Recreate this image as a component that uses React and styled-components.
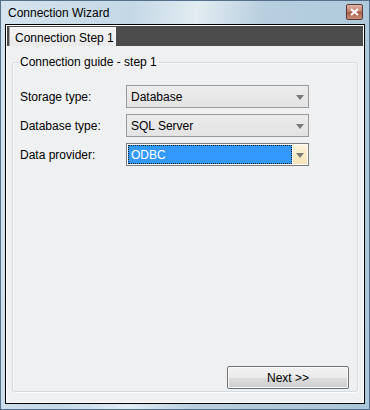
import React from "react";
import styled, { createGlobalStyle } from "styled-components";

const GlobalStyle = createGlobalStyle`
	html, body {
		margin: 0;
		padding: 0;
		background: #9fbfd4;
	}
	body {
		font-family: "Liberation Sans", Arial, sans-serif;
		font-size: 12px;
		color: #000;
	}
`;

const fields = [
	{ label: "Storage type:", value: "Database" },
	{ label: "Database type:", value: "SQL Server" },
	{ label: "Data provider:", value: "ODBC", focused: true },
];

export default function App() {
	return (
		<>
			<GlobalStyle />
			<Window>
				<TitleBar>
					<Title>Connection Wizard</Title>
					<CloseButton>
						<svg width="9" height="8" viewBox="0 0 9 8">
							<path d="M1 1 L8 7 M8 1 L1 7" stroke="#fff" strokeWidth="2" />
						</svg>
					</CloseButton>
				</TitleBar>

				<Client>
					<TabStrip>
						<Tab>Connection Step 1</Tab>
					</TabStrip>
					<Panel>
						<Group>
							<Legend>Connection guide - step 1</Legend>
							<GroupBody>
								<Rows>
									{fields.map((f) => (
										<Row key={f.label}>
											<Label>{f.label}</Label>
											<Combo $focused={f.focused}>
												<ComboText $focused={f.focused}>{f.value}</ComboText>
												<Arrow $focused={f.focused}>
													<svg width="8" height="5" viewBox="0 0 8 5">
														<path d="M0 0 H8 L4 5 Z" fill="#7a7a7a" />
													</svg>
												</Arrow>
											</Combo>
										</Row>
									))}
								</Rows>
								<Footer>
									<NextButton>Next &gt;&gt;</NextButton>
								</Footer>
							</GroupBody>
						</Group>
					</Panel>
				</Client>
			</Window>
		</>
	);
}

const Window = styled.div`
	width: 370px;
	height: 410px;
	box-sizing: border-box;
	display: flex;
	flex-direction: column;
	border: 1px solid #55708a;
	background: linear-gradient(
		100deg,
		#d6e4ee 0%,
		#c4d8e6 30%,
		#e2ecf2 45%,
		#b8cfdf 60%,
		#a9c6da 100%
	);
`;

const TitleBar = styled.div`
	height: 23px;
	display: flex;
	align-items: center;
	justify-content: space-between;
	padding: 0 6px 0 7px;
`;

const Title = styled.div`
	font-size: 12px;
	color: #000;
	padding-top: 1px;
`;

const CloseButton = styled.div`
	width: 15px;
	height: 14px;
	margin-top: -1px;
	border: 1px solid #5a3b34;
	border-radius: 2px;
	display: flex;
	align-items: center;
	justify-content: center;
	background: linear-gradient(#e0b5a8 0%, #c07b68 50%, #a95a47 51%, #c98d77 100%);
`;

const Client = styled.div`
	flex: 1;
	margin: 0 4px 5px 4px;
	border: 1px solid #000;
	box-shadow: inset 0 0 0 1px #fdfdfd;
	display: flex;
	flex-direction: column;
	background: #eff0f1;
	padding: 1px;
`;

const TabStrip = styled.div`
	height: 20px;
	background: #4c4c4c;
	display: flex;
	align-items: flex-end;
	padding-left: 2px;
`;

const Tab = styled.div`
	width: 107px;
	height: 19px;
	box-sizing: border-box;
	background: linear-gradient(#f4f4f4, #e9e9ea);
	border: 1px solid #f8f8f8;
	border-bottom: none;
	border-left-color: #a9a9a9;
	font-size: 12px;
	padding: 3px 0 0 5px;
	white-space: nowrap;
`;

const Panel = styled.div`
	flex: 1;
	display: flex;
	padding: 9px 5px 10px 5px;
`;

const Group = styled.fieldset`
	flex: 1;
	margin: 0;
	padding: 0;
	border: 1px solid #d3dae0;
	border-radius: 3px;
	box-shadow: 1px 1px 0 #fbfbfb, inset 1px 1px 0 #fbfbfb;
	display: flex;
	min-width: 0;
`;

const Legend = styled.legend`
	margin-left: 5px;
	padding: 0 2px;
	font-size: 12px;
	line-height: 14px;
`;

const GroupBody = styled.div`
	flex: 1;
	display: flex;
	flex-direction: column;
	justify-content: space-between;
	padding: 16px 8px 2px 7px;
`;

const Rows = styled.div`
	display: flex;
	flex-direction: column;
	gap: 6px;
`;

const Row = styled.div`
	display: flex;
	align-items: center;
	height: 23px;
`;

const Label = styled.div`
	width: 106px;
	font-size: 12px;
	padding-top: 1px;
`;

const Combo = styled.div`
	width: 183px;
	height: 23px;
	box-sizing: border-box;
	display: flex;
	align-items: stretch;
	border: 1px solid ${(p) => (p.$focused ? "#7c7c7c" : "#9a9a9a")};
	background: ${(p) =>
		p.$focused ? "#fbfbfb" : "linear-gradient(#ececec, #e3e3e3)"};
	padding: ${(p) => (p.$focused ? "1px" : "0")};
`;

const ComboText = styled.div`
	flex: 1;
	display: flex;
	align-items: center;
	padding-left: ${(p) => (p.$focused ? "3px" : "4px")};
	font-size: 12px;
	color: ${(p) => (p.$focused ? "#fff" : "#000")};
	background: ${(p) => (p.$focused ? "#3399ff" : "transparent")};
	outline: ${(p) => (p.$focused ? "1px dotted #1a1a1a" : "none")};
	outline-offset: -1px;
`;

const Arrow = styled.div`
	width: ${(p) => (p.$focused ? "14px" : "17px")};
	display: flex;
	align-items: center;
	justify-content: center;
	padding-top: 1px;
	margin-left: ${(p) => (p.$focused ? "1px" : "0")};
	background: ${(p) => (p.$focused ? "linear-gradient(#fdf4dc, #f6e3b6)" : "transparent")};
`;

const Footer = styled.div`
	display: flex;
	justify-content: flex-end;
`;

const NextButton = styled.div`
	width: 122px;
	height: 23px;
	box-sizing: border-box;
	border: 1px solid #707070;
	border-radius: 2px;
	box-shadow: inset 0 0 0 1px #fcfcfc;
	background: linear-gradient(#f2f2f2 0%, #ebebeb 50%, #dddddd 51%, #cfcfcf 100%);
	display: flex;
	align-items: center;
	justify-content: center;
	font-size: 12px;
`;
